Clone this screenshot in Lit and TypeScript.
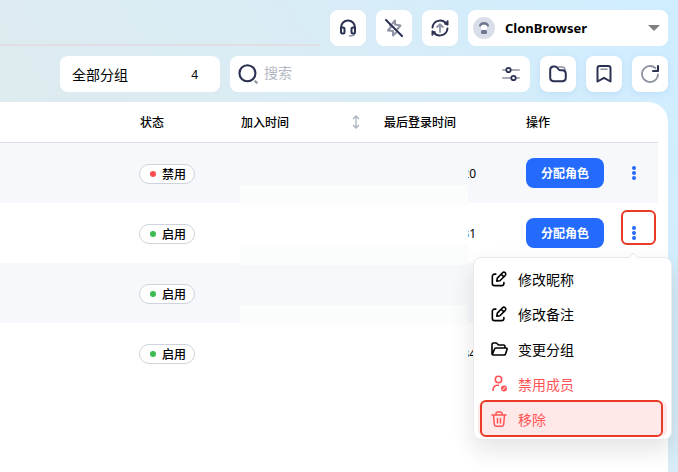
import { LitElement, html, svg, css, nothing } from "lit";
import { customElement, state } from "lit/decorators.js";
import { classMap } from "lit/directives/class-map.js";

interface Member {
  enabled: boolean;
  time: string;
  assignable: boolean;
}

const members: Member[] = [
  { enabled: false, time: "20", assignable: true },
  { enabled: true, time: "31", assignable: true },
  { enabled: true, time: "", assignable: false },
  { enabled: true, time: "34", assignable: false },
];

const icon = (size: number, body: unknown) => html`<svg
  width=${size}
  height=${size}
  viewBox="0 0 18 18"
  fill="none"
  stroke-linecap="round"
  stroke-linejoin="round"
  aria-hidden="true"
>${body}</svg>`;

const NAVY = "#2b3153";
const GREY = "#8f93a3";

const headset = icon(18, svg`
  <path d="M15.500 14.500c0 1.800-1.500 2.500-5 2.500" stroke=${GREY} stroke-width="1.600"/>
  <g stroke=${NAVY} stroke-width="2">
    <path d="M2 9.500V8.500a7 7 0 0 1 14 0v1"/>
    <rect x="2" y="8.500" width="3.500" height="6" rx="1.500"/>
    <rect x="12.500" y="8.500" width="3.500" height="6" rx="1.500"/>
  </g>`);

const flashOff = icon(18, svg`
  <path d="M7.500 4.500L10 1.500V5.500L15.500 6.500L12.500 10M5 6L6.500 7.500M5.500 8.500L3 11.500L8 12L8 16.500L11 13.500" stroke=${GREY} stroke-width="2"/>
  <path d="M1 1L17 17" stroke=${NAVY} stroke-width="2"/>`);

const syncUp = icon(18, svg`
  <g stroke=${NAVY} stroke-width="2">
    <path d="M1.500 8.500A7.700 7.700 0 0 1 15.300 4.600"/>
    <path d="M16.500 9.500A7.700 7.700 0 0 1 2.700 13.400"/>
    <path d="M17 1.800v4.400l-3.200-1.200zM1 16.200v-4.400l3.200 1.200z" fill=${NAVY} stroke-width="1"/>
  </g>
  <path d="M9 13V5.500M6.200 8L9 5.200L11.800 8" stroke=${GREY} stroke-width="1.800"/>`);

const searchIcon = icon(20, svg`
  <circle cx="8.500" cy="8.300" r="7.200" stroke=${NAVY} stroke-width="1.900"/>
  <path d="M15.600 15.600l1.200 1.200" stroke=${GREY} stroke-width="2"/>`);

const sliders = icon(18, svg`
  <g stroke=${GREY} stroke-width="1.600"><path d="M.8 5H4M9 5h8.200M.8 13H9M14 13h3.200"/></g>
  <g stroke=${NAVY} stroke-width="1.800"><circle cx="6.500" cy="5" r="2.200"/><circle cx="11.500" cy="13" r="2.200"/></g>`);

const folder = icon(18, svg`
  <path d="M9.500 2h3.500c2.300 0 3 1 3 3" stroke=${GREY} stroke-width="1.600"/>
  <path d="M1.200 5C1.200 2.500 2.300 1.500 4.500 1.500h1.300c1.500 0 2 .5 2.700 1.500l1.200 1.500c.5.700.8.800 1.800.8h2c2.200 0 3.300 1.200 3.300 3.500v3.700c0 2.500-1.300 3.800-3.800 3.800H5c-2.500 0-3.800-1.300-3.800-3.800z" stroke=${NAVY} stroke-width="2"/>`);

const bookmark = icon(18, svg`
  <path d="M2.500 3.200c0-1.400.8-2.200 2.300-2.200h8.400c1.500 0 2.300.8 2.300 2.200V16.500L9 12.800L2.500 16.500z" stroke=${NAVY} stroke-width="2"/>
  <path d="M6 4.200h6" stroke=${GREY} stroke-width="1.600"/>`);

const refresh = icon(18, svg`
  <path d="M17 9.500A8 8 0 1 1 14.500 3.200" stroke=${GREY} stroke-width="1.800"/>
  <path d="M17 1v5h-5" stroke=${NAVY} stroke-width="2"/>`);

const edit = icon(16, svg`
  <g stroke="currentColor" stroke-width="1.800">
    <path d="M5.500 3.500H4A2.500 2.500 0 0 0 1.500 6v8A2.500 2.500 0 0 0 4 16.500h8a2.500 2.500 0 0 0 2.500-2.500v-1"/>
    <path d="M6.500 11.500l.6-3.500L13 2a2 2 0 0 1 3 3L10 11zM11.500 3.600l3 3"/>
  </g>`);

const folderOpen = icon(18, svg`
  <path d="M2 14V4.500C2 3.500 2.500 3 3.500 3h3l2 2h5c1 0 1.500.5 1.500 1.500V8M2.300 14.500L4.500 9c.2-.7.6-1 1.300-1H16c.9 0 1.300.6 1 1.500l-1.500 4.500c-.2.700-.6 1-1.300 1H3c-.7 0-1-.4-1-1" stroke="currentColor" stroke-width="1.600"/>`);

const userOff = icon(18, svg`
  <g stroke="currentColor" stroke-width="1.600">
    <circle cx="8.500" cy="4.500" r="3.200"/>
    <path d="M3 15.500c0-3.800 2-5.500 5.500-5.300"/>
  </g>
  <circle cx="14" cy="13.500" r="3" fill="currentColor"/>
  <path d="M12.800 14.700l2.400-2.400" stroke="#fff" stroke-width="1"/>`);

const trash = icon(18, svg`
  <path d="M2 5h14M6 5V3.500C6 2.500 6.500 2 7.500 2h3c1 0 1.500.5 1.500 1.500V5M3.500 5l.8 9.500c.1 1.300.7 1.800 2 1.800h5.400c1.300 0 1.900-.5 2-1.800L14.500 5M7.500 8.500v4.500M10.500 8.500v4.500" stroke="currentColor" stroke-width="1.500"/>`);

const avatar = html`<svg width="22" height="22" viewBox="0 0 22 22" aria-hidden="true">
  <circle cx="11" cy="11" r="11" fill="#d9deea"/>
  <path d="M6 9.500C6 6.500 8 5 11 5s5 1.500 5 4.500z" fill="#6d7792"/>
  <path d="M8 9c1-1.600 5-1.600 6 0v1.500c0 1.600-1 2.500-3 2.500s-3-.9-3-2.500z" fill="#fff"/>
  <rect x="8" y="13" width="6" height="4" rx="1.500" fill="#6d7792"/>
</svg>`;

@customElement("app-root")
export class AppRoot extends LitElement {
  @state() private menuRow = 1;

  static styles = css`
    :host {
      display: flex;
      flex-direction: column;
      gap: 10px;
      box-sizing: border-box;
      min-height: 100vh;
      padding: 10px 10px 0 0;
      overflow: hidden;
      background: linear-gradient(55deg, #e0ebef 0%, #deebef 26%, #d9ecf5 60%, #d0edff 94%);
      font-family: "Noto Sans", "Noto Sans CJK SC", sans-serif;
      font-size: 12px;
      color: #000;
    }
    *, *::before, *::after { box-sizing: border-box; }
    button, select, input {
      font: inherit;
      color: inherit;
      border: 0;
      padding: 0;
      margin: 0;
      background: none;
    }
    svg { display: block; flex: none; }
    .bar { display: flex; gap: 10px; }
    .rule { flex: 1; border-bottom: 2px solid #dfdfe4; }
    .tile {
      display: grid;
      place-items: center;
      width: 36px;
      height: 36px;
      border-radius: 8px;
      background: #fff;
    }
    .raised { box-shadow: 0 2px 6px #a5cdf266; }
    .account, .group, .search {
      display: flex;
      align-items: center;
      height: 36px;
      border-radius: 8px;
      background: #fff;
    }
    .account { width: 200px; padding: 0 8px 0 5px; gap: 8px; }
    .account select {
      flex: 1;
      min-width: 0;
      appearance: none;
      padding-left: 2px;
      font-size: 13px;
      font-weight: 700;
    }
    .caret {
      border: 6px solid transparent;
      border-top-color: #7f7f7f;
      border-bottom: 0;
    }
    .toolbar { padding-left: 60px; }
    .group {
      justify-content: space-between;
      width: 160px;
      padding: 0 22px 0 12px;
      font-size: 14px;
    }
    .count { font-size: 12px; }
    .search { flex: 1; min-width: 0; padding: 0 10px 0 8px; gap: 6px; }
    .search input {
      flex: 1;
      min-width: 0;
      height: 100%;
      padding-bottom: 4px;
      font-size: 14px;
      outline: 0;
    }
    .search input::placeholder { color: #b4b8c2; opacity: 1; }
    .panel {
      flex: 1;
      padding-right: 10px;
      border-radius: 0 20px 0 0;
      background: #fff;
    }
    table { width: 100%; table-layout: fixed; border-collapse: separate; border-spacing: 0; }
    th, td { padding: 0 12px; text-align: left; }
    th { height: 41px; border-bottom: 1px solid #dcdfe5; font-weight: 500; }
    td { height: 60px; }
    tbody tr:nth-child(odd) { background: #f7f8fb; }
    .c-status { width: 101px; }
    .c-joined { width: 143px; }
    .c-login { width: 142px; }
    .c-actions { width: 144px; }
    .sortable { display: flex; justify-content: space-between; align-items: center; }
    td.status { padding: 2px 0 0 11px; }
    .tag {
      display: flex;
      align-items: center;
      gap: 6px;
      width: 56px;
      height: 20px;
      padding-left: 10px;
      border: 1px solid #ced3dc;
      border-radius: 10px;
      background: #fff;
      font-weight: 500;
    }
    .dot { width: 6px; height: 6px; border-radius: 3px; background: #ff4d4f; }
    .dot.on { background: #3dbb50; }
    .joined { position: relative; }
    .veil {
      position: absolute;
      left: 11px;
      top: 42px;
      width: 228px;
      height: 20px;
      background: #fbfdfc;
      z-index: 1;
    }
    .time {
      display: flex;
      justify-content: flex-end;
      width: 8px;
      margin-left: 84px;
      overflow: hidden;
    }
    .actions { display: flex; align-items: center; gap: 12px; position: relative; }
    .assign {
      flex: none;
      width: 78px;
      height: 30px;
      border-radius: 8px;
      background: #246bfd;
      color: #fff;
      font-weight: 700;
    }
    .more { flex: none; display: grid; place-items: center; width: 36px; height: 36px; }
    .more.marked::after, .item.marked::after {
      content: "";
      position: absolute;
      border: 2px solid #e93a25;
      border-radius: 6px;
      pointer-events: none;
    }
    .more.marked::after { left: 95px; top: -5px; width: 35px; height: 35px; }
    .item.marked::after { inset: -1px 4px -1px 2px; }
    .menu {
      position: absolute;
      z-index: 2;
      top: 42px;
      right: -26px;
      width: 199px;
      padding: 3px 4px;
      border: 1px solid #e8eaee;
      border-radius: 8px;
      background: #fff;
      box-shadow: 0 10px 24px #0000001c;
    }
    .menu::before {
      content: "";
      position: absolute;
      top: -4px;
      right: 34px;
      width: 7px;
      height: 7px;
      border: 1px solid #e8eaee;
      border-width: 1px 0 0 1px;
      background: #fff;
      transform: rotate(45deg);
    }
    .item {
      position: relative;
      display: flex;
      align-items: center;
      gap: 10px;
      width: 100%;
      height: 35px;
      padding-left: 12px;
      border-radius: 6px;
      font-size: 14px;
    }
    .glyph { display: grid; place-items: center; width: 18px; }
    .danger { color: #ff5356; }
    .active { background: #ffe8e8; }
  `;

  private renderMenu() {
    const items = [
      { label: "修改昵称", glyph: edit },
      { label: "修改备注", glyph: edit },
      { label: "变更分组", glyph: folderOpen },
      { label: "禁用成员", glyph: userOff, danger: true },
      { label: "移除", glyph: trash, danger: true, active: true },
    ];
    return html`<div class="menu" role="menu">
      ${items.map(
        (i) => html`<button
          role="menuitem"
          class=${classMap({ item: true, danger: !!i.danger, active: !!i.active, marked: !!i.active })}
        ><span class="glyph">${i.glyph}</span>${i.label}</button>`
      )}
    </div>`;
  }

  private renderActions(index: number) {
    const open = index === this.menuRow;
    return html`<div class="actions">
      <button class="assign">分配角色</button>
      <button
        class=${classMap({ more: true, marked: open })}
        aria-label="更多"
        aria-expanded=${open ? "true" : "false"}
        @click=${() => (this.menuRow = open ? -1 : index)}
      >
        <svg width="4" height="16" fill="#246bfd" aria-hidden="true">
          <circle cx="2" cy="3" r="2"/><circle cx="2" cy="8" r="2"/><circle cx="2" cy="13" r="2"/>
        </svg>
      </button>
      ${open ? this.renderMenu() : nothing}
    </div>`;
  }

  private renderRow(m: Member, index: number) {
    return html`<tr>
      <td></td>
      <td class="status">
        <span class="tag"><i class=${classMap({ dot: true, on: m.enabled })}></i>${m.enabled ? "启用" : "禁用"}</span>
      </td>
      <td class="joined">${index < 3 ? html`<div class="veil"></div>` : nothing}</td>
      <td><span class="time">${m.time}</span></td>
      <td>${m.assignable ? this.renderActions(index) : nothing}</td>
    </tr>`;
  }

  render() {
    return html`
      <header class="bar">
        <div class="rule"></div>
        <button class="tile" aria-label="客服">${headset}</button>
        <button class="tile" aria-label="加速">${flashOff}</button>
        <button class="tile" aria-label="同步">${syncUp}</button>
        <label class="account">
          ${avatar}
          <select aria-label="账号"><option>ClonBrowser</option></select>
          <i class="caret"></i>
        </label>
      </header>
      <div class="bar toolbar">
        <button class="group"><span>全部分组</span><span class="count">4</span></button>
        <label class="search">
          ${searchIcon}
          <input type="text" placeholder="搜索" aria-label="搜索" />
          ${sliders}
        </label>
        <button class="tile raised" aria-label="分组">${folder}</button>
        <button class="tile raised" aria-label="标签">${bookmark}</button>
        <button class="tile raised" aria-label="刷新">${refresh}</button>
      </div>
      <main class="panel">
        <table>
          <colgroup>
            <col /><col class="c-status" /><col class="c-joined" /><col class="c-login" /><col class="c-actions" />
          </colgroup>
          <thead>
            <tr>
              <th></th>
              <th>状态</th>
              <th>
                <div class="sortable">加入时间
                  <svg width="8" height="14" viewBox="0 0 8 14" fill="none" stroke="#aeb4bf" stroke-width="1.3" aria-hidden="true">
                    <path d="M4 1.500v11M1 4l3-3 3 3M1 10l3 3 3-3"/>
                  </svg>
                </div>
              </th>
              <th>最后登录时间</th>
              <th>操作</th>
            </tr>
          </thead>
          <tbody>${members.map((m, i) => this.renderRow(m, i))}</tbody>
        </table>
      </main>
    `;
  }
}
